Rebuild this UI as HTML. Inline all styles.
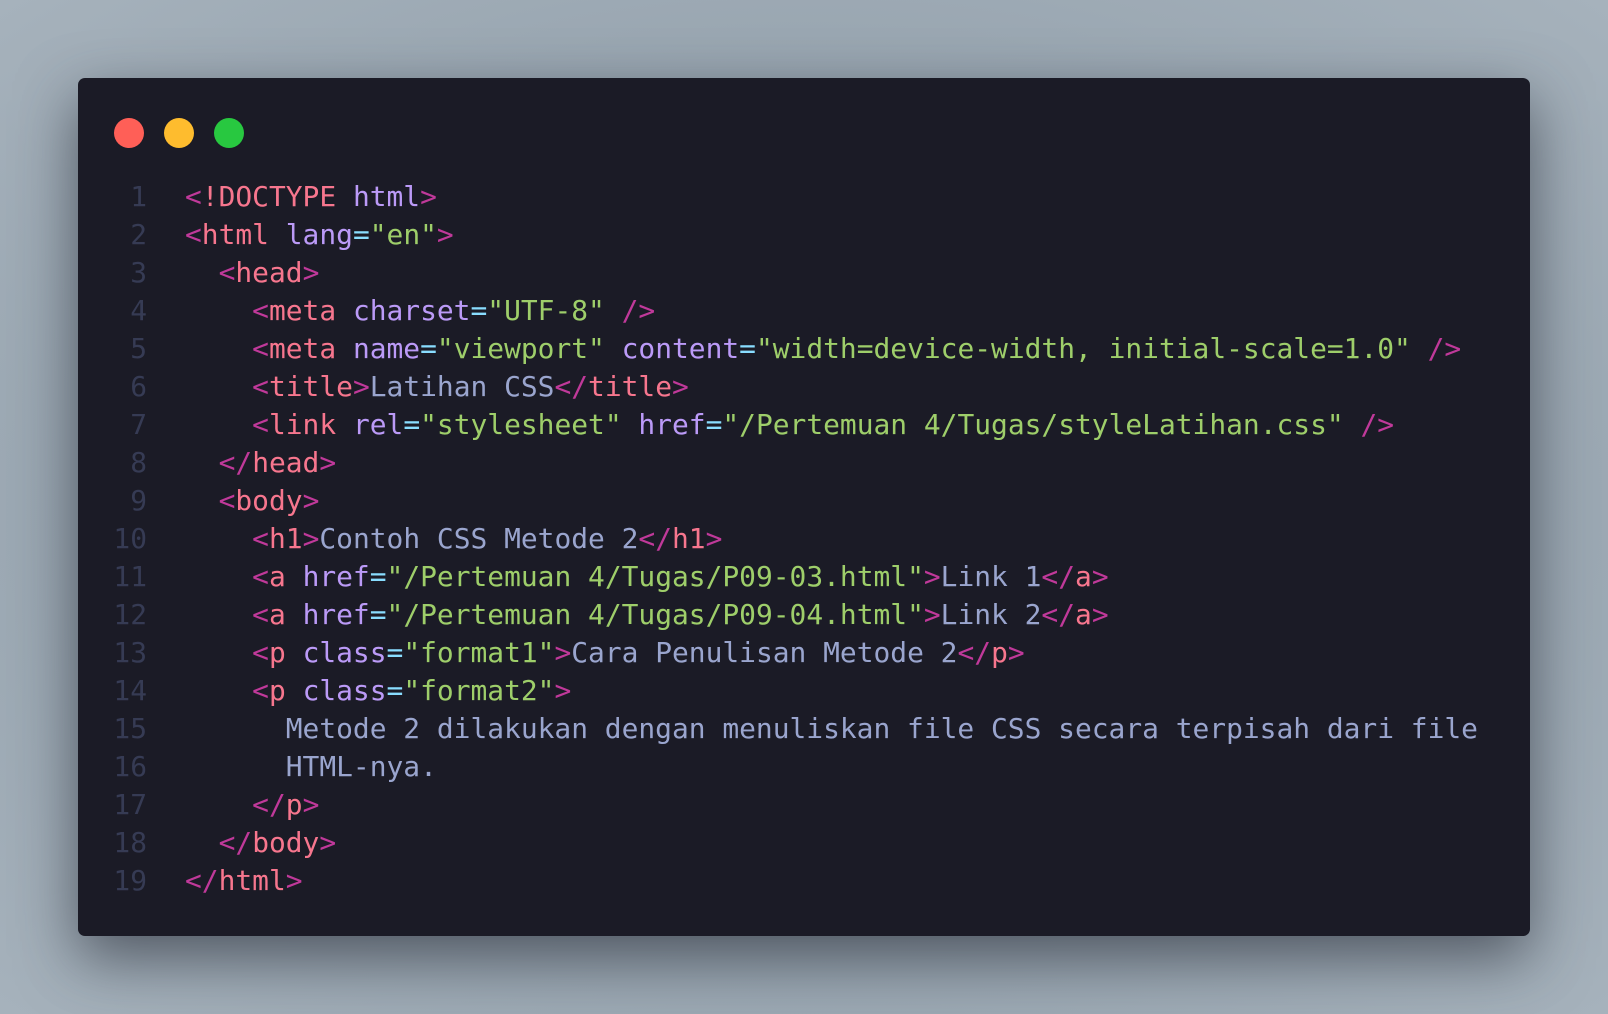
<!DOCTYPE html>
<html><head><style>
html,body{margin:0;padding:0;width:1608px;height:1014px;overflow:hidden}
body{background:radial-gradient(ellipse at 50% 50%,#7f8a94 0%,#98a5b0 60%,#a6b2bc 100%)}
.win{position:absolute;left:78px;top:78px;width:1452px;height:858px;background:#1b1b26;border-radius:7px;box-shadow:0 22px 60px rgba(40,45,55,.65)}
.dot{position:absolute;top:118px;width:30px;height:30px;border-radius:50%}
pre{position:absolute;margin:0;top:178px;font-family:"DejaVu Sans Mono","Liberation Mono",monospace;font-size:27.9px;line-height:38px;white-space:pre}
.ln{left:105px;width:42px;text-align:right;color:#363b54}
.code{left:185px;color:#9aa5ce}
.b{color:#c0399a}.t{color:#f7768e}.a{color:#bb9af7}.e{color:#89ddff}.s{color:#9ece6a}
</style></head><body>
<div class="win"></div>
<div class="dot" style="left:114px;background:#ff5f57"></div>
<div class="dot" style="left:164px;background:#febc2e"></div>
<div class="dot" style="left:214px;background:#28c840"></div>
<pre class="ln">1
2
3
4
5
6
7
8
9
10
11
12
13
14
15
16
17
18
19</pre>
<pre class="code"><span class="b">&lt;</span><span class="t">!DOCTYPE</span> <span class="a">html</span><span class="b">&gt;</span>
<span class="b">&lt;</span><span class="t">html</span> <span class="a">lang</span><span class="e">=</span><span class="s">"en"</span><span class="b">&gt;</span>
  <span class="b">&lt;</span><span class="t">head</span><span class="b">&gt;</span>
    <span class="b">&lt;</span><span class="t">meta</span> <span class="a">charset</span><span class="e">=</span><span class="s">"UTF-8"</span> <span class="b">/&gt;</span>
    <span class="b">&lt;</span><span class="t">meta</span> <span class="a">name</span><span class="e">=</span><span class="s">"viewport"</span> <span class="a">content</span><span class="e">=</span><span class="s">"width=device-width, initial-scale=1.0"</span> <span class="b">/&gt;</span>
    <span class="b">&lt;</span><span class="t">title</span><span class="b">&gt;</span>Latihan CSS<span class="b">&lt;/</span><span class="t">title</span><span class="b">&gt;</span>
    <span class="b">&lt;</span><span class="t">link</span> <span class="a">rel</span><span class="e">=</span><span class="s">"stylesheet"</span> <span class="a">href</span><span class="e">=</span><span class="s">"/Pertemuan 4/Tugas/styleLatihan.css"</span> <span class="b">/&gt;</span>
  <span class="b">&lt;/</span><span class="t">head</span><span class="b">&gt;</span>
  <span class="b">&lt;</span><span class="t">body</span><span class="b">&gt;</span>
    <span class="b">&lt;</span><span class="t">h1</span><span class="b">&gt;</span>Contoh CSS Metode 2<span class="b">&lt;/</span><span class="t">h1</span><span class="b">&gt;</span>
    <span class="b">&lt;</span><span class="t">a</span> <span class="a">href</span><span class="e">=</span><span class="s">"/Pertemuan 4/Tugas/P09-03.html"</span><span class="b">&gt;</span>Link 1<span class="b">&lt;/</span><span class="t">a</span><span class="b">&gt;</span>
    <span class="b">&lt;</span><span class="t">a</span> <span class="a">href</span><span class="e">=</span><span class="s">"/Pertemuan 4/Tugas/P09-04.html"</span><span class="b">&gt;</span>Link 2<span class="b">&lt;/</span><span class="t">a</span><span class="b">&gt;</span>
    <span class="b">&lt;</span><span class="t">p</span> <span class="a">class</span><span class="e">=</span><span class="s">"format1"</span><span class="b">&gt;</span>Cara Penulisan Metode 2<span class="b">&lt;/</span><span class="t">p</span><span class="b">&gt;</span>
    <span class="b">&lt;</span><span class="t">p</span> <span class="a">class</span><span class="e">=</span><span class="s">"format2"</span><span class="b">&gt;</span>
      Metode 2 dilakukan dengan menuliskan file CSS secara terpisah dari file
      HTML-nya.
    <span class="b">&lt;/</span><span class="t">p</span><span class="b">&gt;</span>
  <span class="b">&lt;/</span><span class="t">body</span><span class="b">&gt;</span>
<span class="b">&lt;/</span><span class="t">html</span><span class="b">&gt;</span></pre>
</body></html>
